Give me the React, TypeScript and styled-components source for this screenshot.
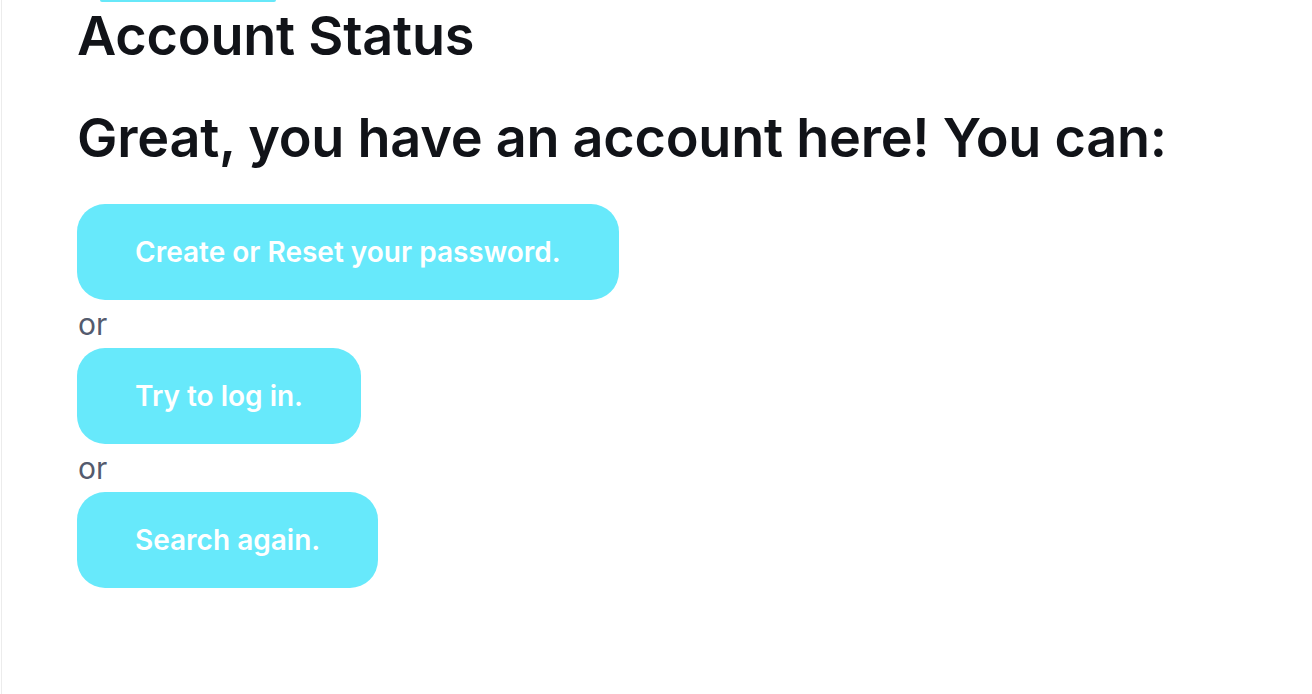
import React from "react";
import styled, { createGlobalStyle } from "styled-components";

const Global = createGlobalStyle`
  html, body { margin: 0; padding: 0; background: #ffffff; }
  body { font-family: Inter, "Noto Sans", sans-serif; }
`;

const Page = styled.div`
  min-height: 694px;
  box-sizing: border-box;
  margin-left: 1px;
  border-left: 1px solid #ececec;
  padding: 0 0 0 75px;
  overflow: hidden;
`;

const ClippedButton = styled.div`
  width: 176px;
  height: 2px;
  margin-left: 23px;
  background: #67e8f9;
  border-radius: 0 0 28px 28px;
`;

const Title = styled.h1`
  margin: 0;
  padding-top: 2px;
  font-size: 54px;
  line-height: 64px;
  font-weight: 600;
  color: #111318;
  letter-spacing: -0.22px;
`;

const Subtitle = styled.h2`
  margin: 38px 0 0 0;
  font-size: 54px;
  line-height: 64px;
  font-weight: 600;
  color: #111318;
  letter-spacing: -0.25px;
`;

const Actions = styled.div`
  display: flex;
  flex-direction: column;
  align-items: flex-start;
  margin-top: 34px;
`;

const ActionButton = styled.button`
  height: 96px;
  padding: 0 58px;
  border: none;
  border-radius: 28px;
  background: #67e9fb;
  color: #ffffff;
  font-family: Inter, "Noto Sans", sans-serif;
  font-size: 28px;
  font-weight: 600;
  cursor: pointer;
`;

const Or = styled.div`
  padding-left: 1px;
  font-size: 30px;
  line-height: 48px;
  color: #545b6e;
`;

export default function App() {
  return (
    <>
      <Global />
      <Page>
        <ClippedButton />
        <Title>Account Status</Title>
        <Subtitle>Great, you have an account here! You can:</Subtitle>
        <Actions>
          <ActionButton>Create or Reset your password.</ActionButton>
          <Or>or</Or>
          <ActionButton>Try to log in.</ActionButton>
          <Or>or</Or>
          <ActionButton>Search again.</ActionButton>
        </Actions>
      </Page>
    </>
  );
}
